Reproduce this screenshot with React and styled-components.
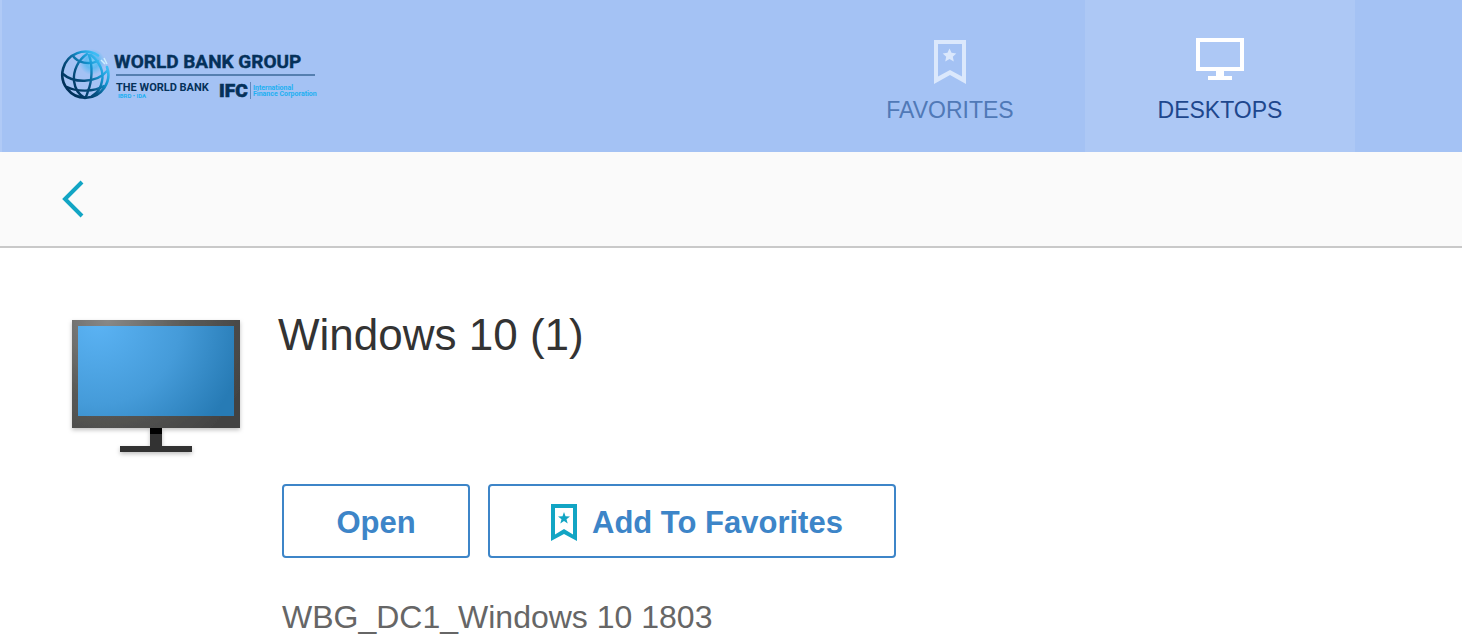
import React from "react";
import styled, { createGlobalStyle } from "styled-components";

const GlobalStyle = createGlobalStyle`
  * { box-sizing: border-box; }
  body {
    margin: 0;
    background: #fff;
    color: #333;
    font-family: "Liberation Sans", Arial, sans-serif;
  }
`;

const Header = styled.header`
  display: flex;
  align-items: stretch;
  justify-content: space-between;
  height: 152px;
  padding-left: 58px;
  padding-right: 107px;
  background: #a4c2f4;
  border-left: 2px solid #b0caf6;
`;

const LogoLink = styled.a`
  display: flex;
  align-items: center;
`;

const Nav = styled.nav`
  display: flex;
`;

const NavLink = styled.a`
  display: flex;
  flex-direction: column;
  align-items: center;
  width: 270px;
  padding-top: 36px;
  gap: 11px;
  background: ${(p) => (p.$active ? "#adc8f5" : "transparent")};
  color: ${(p) => (p.$active ? "#1e478d" : "#5079b7")};
  font-size: 23px;
  line-height: 30px;
  text-decoration: none;
`;

const Toolbar = styled.div`
  display: flex;
  align-items: center;
  height: 96px;
  padding-left: 60px;
  background: #fafafa;
  border-bottom: 2px solid #c9c9c9;
`;

const BackButton = styled.button`
  display: flex;
  padding: 0;
  border: 0;
  background: none;
  cursor: pointer;
`;

const AppDetails = styled.main`
  display: flex;
  gap: 30px;
  padding: 64px 60px 0 64px;
`;

const DesktopPicture = styled.svg`
  flex: none;
  display: block;
`;

const Info = styled.div`
  flex: 1;
  min-width: 0;
`;

const Title = styled.h1`
  margin: 0;
  font-size: 44px;
  line-height: 46px;
  font-weight: 400;
`;

const Actions = styled.div`
  display: flex;
  flex-wrap: wrap;
  gap: 18px;
  margin-top: 126px;
  padding-left: 4px;
`;

const ActionButton = styled.button`
  display: flex;
  align-items: center;
  justify-content: ${(p) => (p.$wide ? "flex-start" : "center")};
  gap: 14px;
  height: 74px;
  padding: 4px 48px 0 ${(p) => (p.$wide ? 61 : 48)}px;
  min-width: ${(p) => (p.$wide ? 408 : 188)}px;
  border: 2px solid #3d85c8;
  border-radius: 4px;
  background: #fff;
  color: #3d85c8;
  font-family: inherit;
  font-size: 31px;
  font-weight: 700;
  cursor: pointer;
`;

const Description = styled.p`
  margin: 40px 0 0;
  padding-left: 4px;
  color: #666;
  font-size: 32px;
  line-height: 38px;
`;

function Logo() {
  return (
    <svg width="258" height="56" viewBox="0 0 258 56" role="img" aria-label="World Bank Group" fontFamily="Roboto, sans-serif">
      <defs>
        <linearGradient id="globe" gradientUnits="userSpaceOnUse" x1="10" y1="42" x2="42" y2="14">
          <stop offset="0" stopColor="#00305a" />
          <stop offset="0.4" stopColor="#064f80" />
          <stop offset="0.75" stopColor="#1496d2" />
          <stop offset="1" stopColor="#3cbdf5" />
        </linearGradient>
        <radialGradient id="shine">
          <stop offset="0" stopColor="#8ad8fb" />
          <stop offset="0.5" stopColor="#2fb2ee" stopOpacity="0.55" />
          <stop offset="1" stopColor="#2cb8f5" stopOpacity="0" />
        </radialGradient>
      </defs>
      <circle cx="32" cy="14" r="13" fill="url(#shine)" />
      <g fill="none" stroke="url(#globe)" strokeWidth="2.400" strokeLinecap="round">
        <path d="M38 7.500A23 23 0 1 0 47 19" strokeWidth="2.600" />
        <path d="M27 6C18 12 13 23 14 33C15 41 19 47 25 50" />
        <path d="M29 7C33 18 32 34 28 43C27 47 26 49 25 50" />
        <path d="M31 7C40 14 44 24 42 33C41 40 38 45 32 48" />
        <path d="M13 8C18 15 29 17 38 13" />
        <path d="M3 26C13 35 36 36 47 23" />
        <path d="M7 39C17 44 34 44 44 38" />
      </g>
      <path d="M41 12l4 4m-1-6l3 6" stroke="#cceeff" strokeWidth="1.500" />
      <text x="54" y="20" fontSize="19" fontWeight="700" fill="#05315a" stroke="#05315a" strokeWidth="0.400">WORLD BANK GROUP</text>
      <rect x="56" y="26" width="199" height="2" fill="#557fb0" />
      <text x="56" y="43" fontSize="11" fontWeight="700" fill="#05315a">THE WORLD BANK</text>
      <text x="58" y="50" fontSize="6" fontWeight="700" fill="#1eb0f2">IBRD • IDA</text>
      <text x="159" y="49" fontSize="19" fontWeight="900" fill="#05315a" stroke="#05315a" strokeWidth="0.600">IFC</text>
      <rect x="190" y="34" width="1" height="17" fill="#6288bd" />
      <text x="193" y="42" fontSize="7" fontWeight="700" fill="#1eb0f2">International</text>
      <text x="193" y="48" fontSize="7" fontWeight="700" fill="#1eb0f2">Finance Corporation</text>
    </svg>
  );
}

function NavBookmarkIcon() {
  return (
    <svg width="52" height="48" viewBox="0 0 52 48" fill="#dbe8fc" aria-hidden="true">
      <path fillRule="evenodd" d="M10 4H42V48L26 39L10 48ZM14 8V40.500L26 34L38 40.500V8Z" />
      <path d="M25.500 12.500L27.500 16.800L32.300 17.400L28.800 20.700L29.800 25.400L25.500 23L21.200 25.400L22.200 20.700L18.700 17.400L23.500 16.800Z" />
    </svg>
  );
}

function NavDesktopIcon() {
  return (
    <svg width="52" height="48" viewBox="0 0 52 48" fill="#fff" aria-hidden="true">
      <path fillRule="evenodd" d="M2 2H50V35H30V40H38V44H14V40H22V35H2ZM6 6V31H46V6Z" />
    </svg>
  );
}

function FavoriteIcon() {
  return (
    <svg width="27" height="38" viewBox="0 0 27 38" fill="#12a5c4" aria-hidden="true">
      <path fillRule="evenodd" d="M0 0H26V37L13 30L0 37ZM4 4V30.500L13 25L22 30.500V4Z" />
      <path d="M13 8L14.500 12.200L19 12.400L15.500 15.200L16.700 19.600L13 17.100L9.300 19.600L10.500 15.200L7 12.400L11.500 12.200Z" />
    </svg>
  );
}

function DesktopIllustration() {
  return (
    <DesktopPicture width="184" height="150" viewBox="0 0 184 150" role="img" aria-label="Desktop">
      <defs>
        <radialGradient id="bezel" gradientUnits="userSpaceOnUse" cx="44" cy="8" r="150">
          <stop offset="0" stopColor="#888" />
          <stop offset="0.5" stopColor="#5b5b58" />
          <stop offset="1" stopColor="#434343" />
        </radialGradient>
        <radialGradient id="screen" gradientUnits="userSpaceOnUse" cx="34" cy="10" r="165">
          <stop offset="0" stopColor="#5bb3f4" />
          <stop offset="0.5" stopColor="#459bd9" />
          <stop offset="0.9" stopColor="#277bb5" />
        </radialGradient>
        <filter id="shadow" x="-10%" y="-10%" width="120%" height="130%">
          <feDropShadow dx="0" dy="2" stdDeviation="2" floodColor="#000" floodOpacity="0.25" />
        </filter>
      </defs>
      <g filter="url(#shadow)">
        <path d="M86 114H98V134H128V140H56V134H86Z" fill="#333" />
        <rect x="86" y="114" width="12" height="8" fill="#000" />
        <rect x="8" y="8" width="168" height="108" fill="url(#bezel)" />
      </g>
      <rect x="14" y="14" width="156" height="90" fill="url(#screen)" />
    </DesktopPicture>
  );
}

export default function App() {
  return (
    <>
      <GlobalStyle />
      <Header>
        <LogoLink href="#home"><Logo /></LogoLink>
        <Nav>
          <NavLink href="#favorites"><NavBookmarkIcon />FAVORITES</NavLink>
          <NavLink href="#desktops" $active aria-current="page"><NavDesktopIcon />DESKTOPS</NavLink>
        </Nav>
      </Header>
      <Toolbar>
        <BackButton type="button" aria-label="Back">
          <svg width="26" height="40" viewBox="0 0 26 40" fill="none" stroke="#12a5c4" strokeWidth="4" aria-hidden="true">
            <path d="M22 3L5 20L22 37" />
          </svg>
        </BackButton>
      </Toolbar>
      <AppDetails>
        <DesktopIllustration />
        <Info>
          <Title>Windows 10 (1)</Title>
          <Actions>
            <ActionButton type="button">Open</ActionButton>
            <ActionButton type="button" $wide><FavoriteIcon />Add To Favorites</ActionButton>
          </Actions>
          <Description>WBG_DC1_Windows 10 1803</Description>
        </Info>
      </AppDetails>
    </>
  );
}
